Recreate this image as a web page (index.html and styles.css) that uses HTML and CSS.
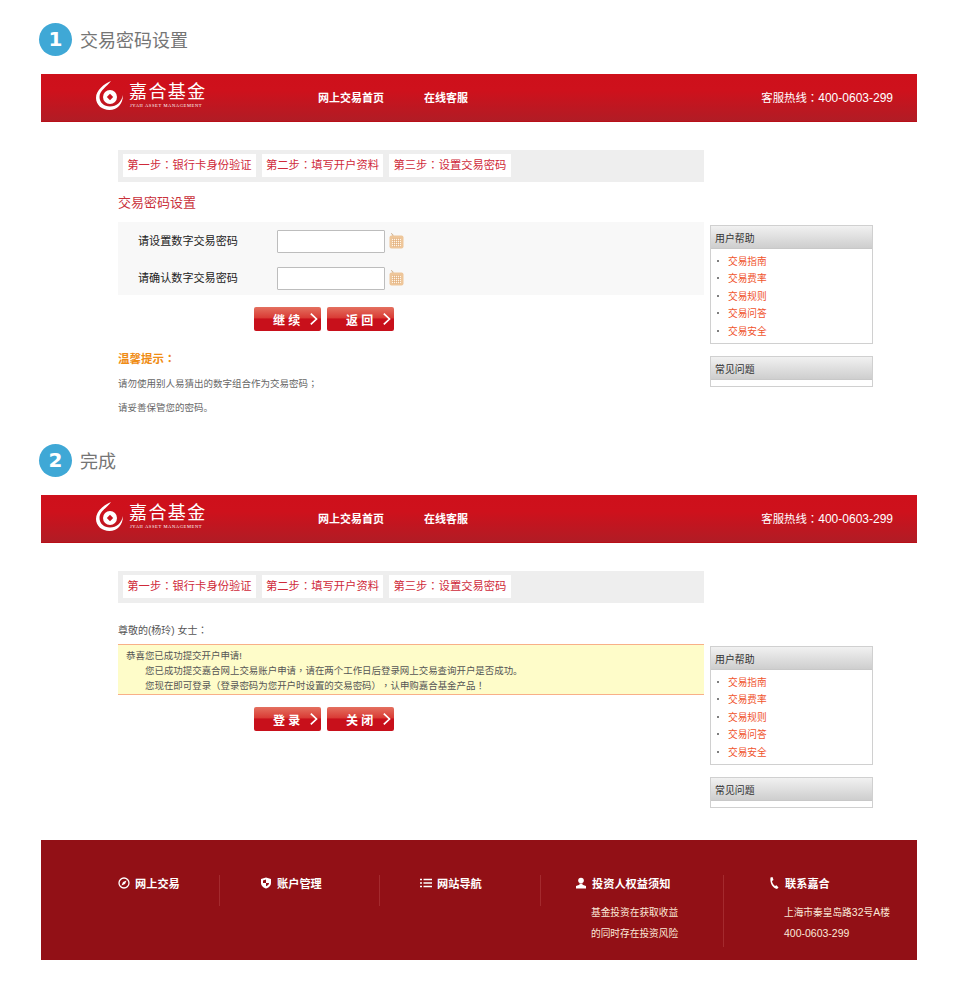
FILE: index.html
```html
<!DOCTYPE html>
<html lang="zh-CN">
<head>
<meta charset="utf-8">
<title>交易密码设置</title>
<link rel="stylesheet" href="styles.css">
</head>
<body>
<svg class="defs" width="0" height="0" aria-hidden="true">
  <symbol id="logo" viewBox="0 0 28 29">
    <path d="M15 0C8 3 0 9 0 17C0 24 6 29 13.500 29C21 29 27 23 27 14C25.500 21 20.500 25.500 14 25.500C8 25.500 3.500 21.500 3.500 16C3.500 9 11 6 15 0Z" fill="#fff"/>
    <circle cx="14" cy="16" r="7" fill="#fff"/>
    <path d="M14 12.800l3.200 3.200-3.200 3.200-3.200-3.200Z" fill="#c8141e"/>
  </symbol>
  <symbol id="keyboard" viewBox="0 0 15 16">
    <path d="M4 3C4 1 3 1 2 .5" fill="none" stroke="#c9a781" stroke-width="1"/>
    <rect x="0.500" y="2.500" width="14" height="13" rx="2" fill="#eec69a"/>
    <path d="M3 6.500h9M3 8.500h9M3 10.500h9M3 12.500h9" stroke="#fff6e8" stroke-width="1"/>
    <path d="M4.500 5.500v8M6.500 5.500v8M8.500 5.500v8M10.500 5.500v8" stroke="#dca877" stroke-width=".7"/>
  </symbol>
  <symbol id="chevron" viewBox="0 0 8 12">
    <path d="M.8 .6L6.500 6 .8 11.400" fill="none" stroke="#fff" stroke-width="1.700"/>
  </symbol>
</svg>

<section class="block">
  <h2 class="block-title"><span class="num">1</span>交易密码设置</h2>
  <header class="banner">
    <div class="logo">
      <svg class="logo-mark"><use href="#logo"/></svg>
      <div class="logo-text"><span class="logo-cn">嘉合基金</span><span class="logo-en">JYAH ASSET MANAGEMENT</span></div>
    </div>
    <nav class="nav"><a>网上交易首页</a><a>在线客服</a></nav>
    <div class="hotline"><span class="hotline-cn">客服热线<span class="mid" lang="zh-TW">：</span></span>400-0603-299</div>
  </header>
  <div class="content">
    <main class="main">
      <div class="steps"><span class="step">第一步<span class="mid" lang="zh-TW">：</span>银行卡身份验证</span><span class="step">第二步<span class="mid" lang="zh-TW">：</span>填写开户资料</span><span class="step">第三步<span class="mid" lang="zh-TW">：</span>设置交易密码</span></div>
      <h3 class="form-title">交易密码设置</h3>
      <form class="form">
        <div class="form-row"><label class="form-label">请设置数字交易密码</label><input class="form-input" type="password"><svg class="kb"><use href="#keyboard"/></svg></div>
        <div class="form-row"><label class="form-label">请确认数字交易密码</label><input class="form-input" type="password"><svg class="kb"><use href="#keyboard"/></svg></div>
      </form>
      <div class="actions">
        <a class="btn">继 续<svg class="chev"><use href="#chevron"/></svg></a>
        <a class="btn">返 回<svg class="chev"><use href="#chevron"/></svg></a>
      </div>
      <h4 class="tips-title">温馨提示<span class="mid" lang="zh-TW">：</span></h4>
      <p class="tip">请勿使用别人易猜出的数字组合作为交易密码<span class="mid" lang="zh-TW">；</span></p>
      <p class="tip">请妥善保管您的密码。</p>
    </main>
    <aside class="side">
      <div class="box box-help">
        <div class="box-head">用户帮助</div>
        <ul class="links"><li>交易指南</li><li>交易费率</li><li>交易规则</li><li>交易问答</li><li>交易安全</li></ul>
      </div>
      <div class="box box-faq"><div class="box-head">常见问题</div></div>
    </aside>
  </div>
</section>

<section class="block block-second">
  <h2 class="block-title"><span class="num">2</span>完成</h2>
  <header class="banner">
    <div class="logo">
      <svg class="logo-mark"><use href="#logo"/></svg>
      <div class="logo-text"><span class="logo-cn">嘉合基金</span><span class="logo-en">JYAH ASSET MANAGEMENT</span></div>
    </div>
    <nav class="nav"><a>网上交易首页</a><a>在线客服</a></nav>
    <div class="hotline"><span class="hotline-cn">客服热线<span class="mid" lang="zh-TW">：</span></span>400-0603-299</div>
  </header>
  <div class="content">
    <main class="main">
      <div class="steps"><span class="step">第一步<span class="mid" lang="zh-TW">：</span>银行卡身份验证</span><span class="step">第二步<span class="mid" lang="zh-TW">：</span>填写开户资料</span><span class="step">第三步<span class="mid" lang="zh-TW">：</span>设置交易密码</span></div>
      <p class="greeting">尊敬的(杨玲) 女士<span class="mid" lang="zh-TW">：</span></p>
      <div class="notice">
        <p>恭喜您已成功提交开户申请!</p>
        <p class="notice-indent">您已成功提交嘉合网上交易账户申请<span class="mid" lang="zh-TW">，</span>请在两个工作日后登录网上交易查询开户是否成功。</p>
        <p class="notice-indent">您现在即可登录<span class="mid" lang="zh-TW">（</span>登录密码为您开户时设置的交易密码<span class="mid" lang="zh-TW">），</span>认申购嘉合基金产品<span class="mid" lang="zh-TW">！</span></p>
      </div>
      <div class="actions">
        <a class="btn">登 录<svg class="chev"><use href="#chevron"/></svg></a>
        <a class="btn">关 闭<svg class="chev"><use href="#chevron"/></svg></a>
      </div>
    </main>
    <aside class="side">
      <div class="box box-help">
        <div class="box-head">用户帮助</div>
        <ul class="links"><li>交易指南</li><li>交易费率</li><li>交易规则</li><li>交易问答</li><li>交易安全</li></ul>
      </div>
      <div class="box box-faq"><div class="box-head">常见问题</div></div>
    </aside>
  </div>
</section>

<footer class="footer">
  <div class="fcol fcol-1"><div class="ftitle"><svg class="ficon" viewBox="0 0 12 12"><circle cx="6" cy="6" r="5" fill="none" stroke="#fff" stroke-width="1.300"/><path d="M8.500 3.500L7 7 3.500 8.500 5 5Z" fill="#fff"/></svg>网上交易</div></div>
  <div class="fcol fcol-2"><div class="ftitle"><svg class="ficon" viewBox="0 0 12 12"><path d="M6 .5L11 2v4c0 3-2.500 4.800-5 5.500C3.500 10.800 1 9 1 6V2Z" fill="#fff"/><path d="M6 2.500V6H9c0 1.700-1.500 2.800-3 3.300V6H3V3.400Z" fill="#921016"/></svg>账户管理</div></div>
  <div class="fcol fcol-3"><div class="ftitle"><svg class="ficon" viewBox="0 0 12 12"><path d="M3.500 2.500H12M3.500 6H12M3.500 9.500H12" stroke="#fff" stroke-width="1.500"/><path d="M0 2.500H2M0 6H2M0 9.500H2" stroke="#fff" stroke-width="1.500"/></svg>网站导航</div></div>
  <div class="fcol fcol-4"><div class="ftitle"><svg class="ficon" viewBox="0 0 12 12"><circle cx="6" cy="3.500" r="2.800" fill="#fff"/><path d="M4.500 6.500h3v1.200L11 9v2.500H1V9l3.500-1.300Z" fill="#fff"/></svg>投资人权益须知</div>
    <p class="fsub">基金投资在获取收益</p><p class="fsub">的同时存在投资风险</p></div>
  <div class="fcol fcol-5"><div class="ftitle"><svg class="ficon" viewBox="0 0 12 12"><path d="M2.500 .5L4.500 0l1 3-1.500 1c.3 2 1.300 3.700 3 5l1.500-.8L10.500 10.500 9 12C5 11.500 1.500 6 2.500 .5Z" fill="#fff"/></svg>联系嘉合</div>
    <p class="fsub">上海市秦皇岛路<span class="fnum">32</span>号<span class="fnum">A</span>楼</p><p class="fsub fnum">400-0603-299</p></div>
</footer>
</body>
</html>
```

FILE: styles.css
```css
* { box-sizing: border-box; }
html, body { margin: 0; padding: 0; background: #fff; }
body {
  width: 963px;
  height: 1005px;
  overflow: hidden;
  font-family: "Liberation Sans", "Noto Sans CJK SC", sans-serif;
  color: #666;
  text-spacing-trim: space-all;
}
h2, h3, h4, p, ul { margin: 0; padding: 0; }
.defs { position: absolute; }
.mid { font-family: "Noto Sans CJK TC", sans-serif; line-height: 1; }

.block { padding-top: 23px; }
.block-second { padding-top: 24px; }
.block-title {
  display: flex;
  align-items: center;
  gap: 8px;
  height: 33px;
  padding-left: 39px;
  padding-bottom: 1px;
  font-size: 18px;
  font-weight: 400;
  color: #757575;
}
.num {
  width: 33px;
  height: 33px;
  margin-bottom: -1px;
  border-radius: 50%;
  background: #3fa8d6;
  color: #fff;
  font-family: "DejaVu Sans", sans-serif;
  font-size: 20px;
  font-weight: 700;
  line-height: 33px;
  text-align: center;
}

.banner {
  display: flex;
  align-items: center;
  width: 876px;
  height: 48px;
  margin: 18px 0 0 41px;
  padding: 0 24px 0 55px;
  background: linear-gradient(#ce101b 0, #ce111c 35%, #b11c25 100%);
  border-bottom: 1px solid #b80f18;
  color: #fff;
}
.logo { display: flex; width: 222px; height: 48px; padding-top: 7px; }
.logo-mark { width: 28px; height: 29px; }
.logo-text { display: flex; flex-direction: column; margin: -2px 0 0 5px; }
.logo-cn { font-family: "Noto Sans CJK SC", sans-serif; font-size: 18px; font-weight: 400; line-height: 23px; letter-spacing: 1.400px; }
.logo-en { font-family: "Liberation Serif", serif; font-size: 4.500px; line-height: 6px; letter-spacing: 0.620px; white-space: nowrap; padding-left: 1px; margin-top: 1px; }
.nav { display: flex; gap: 40px; margin-bottom: 1px; font-size: 11px; font-weight: 700; }
.hotline { margin-left: auto; margin-bottom: 1px; font-size: 12px; }
.hotline-cn { font-size: 11.400px; }

.content { display: flex; padding: 28px 0 0 118px; }
.main { width: 586px; }
.side { width: 163px; margin-left: 6px; padding-top: 75px; }

.steps {
  display: flex;
  gap: 5.800px;
  height: 32px;
  padding: 4px 5px;
  background: #eeeeee;
}
.step {
  height: 23px;
  padding: 0 4.300px;
  background: #fff;
  color: #cf2a3a;
  font-size: 11.300px;
  line-height: 22px;
  white-space: nowrap;
}

.form-title {
  height: 40px;
  padding-top: 3px;
  font-size: 13px;
  font-weight: 400;
  line-height: 36px;
  color: #c9303a;
}
.form {
  display: flex;
  flex-direction: column;
  gap: 14px;
  height: 73px;
  padding: 8px 0 0 20px;
  background: #f8f8f8;
}
.form-row { display: flex; align-items: center; height: 23px; }
.form-label { width: 139px; margin-bottom: 3px; font-size: 11.100px; color: #222; }
.form-input {
  width: 108px;
  height: 23px;
  margin: 0;
  padding: 0;
  background: #fff;
  border: 1px solid #bdbdbd;
  border-radius: 1px;
  outline: none;
}
.kb { width: 15px; height: 16px; margin: 0 0 2px 4px; }

.actions { display: flex; gap: 6px; margin-top: 12px; padding-left: 136px; }
.btn {
  display: flex;
  align-items: center;
  justify-content: space-between;
  width: 67px;
  height: 24px;
  padding: 0 3px 0 19px;
  border-radius: 2px;
  background: linear-gradient(#e4705f 0, #d93b35 45%, #c8101b 50%, #c8101b 100%);
  color: #fff;
  font-size: 12px;
  font-weight: 700;
  white-space: pre;
}
.chev { width: 8px; height: 12px; }

.tips-title {
  height: 16px;
  margin-top: 20px;
  font-size: 11.500px;
  font-weight: 700;
  line-height: 16px;
  color: #f08c14;
}
.tips-title + .tip { margin-top: 5px; }
.tip { height: 24px; font-size: 9.500px; line-height: 24px; color: #666; }

.greeting { height: 35px; padding-top: 20px; font-size: 10px; line-height: 16px; color: #555; }
.notice {
  height: 51px;
  margin-top: 6px;
  padding: 3px 8px 0;
  background: #fefcc9;
  border-top: 1px solid #f8b088;
  border-bottom: 1px solid #f8b088;
  font-size: 9.450px;
  line-height: 15px;
  color: #555;
}
.notice p { height: 15px; }
.notice-indent { padding-left: 19px; white-space: nowrap; }

.box {
  background: #fff;
  border: 1px solid #d0d0d0;
}
.box-help { height: 119px; }
.box-faq { height: 31px; margin-top: 12px; }
.box-head {
  height: 23px;
  padding-left: 4px;
  background: linear-gradient(#f1f1f1, #cecece);
  border-bottom: 1px solid #c8c8c8;
  font-size: 9.900px;
  line-height: 25px;
  color: #333;
}
.links { list-style: none; padding: 3px 0 0 6px; }
.links li {
  display: flex;
  align-items: center;
  height: 17.500px;
  font-size: 9.700px;
  color: #f0532d;
}
.links li::before {
  content: "";
  width: 2px;
  height: 2px;
  margin-right: 9px;
  background: #555;
  border-radius: 50%;
}

.footer {
  display: grid;
  grid-template-columns: 179px 160px 161px 183px 193px;
  align-items: start;
  width: 876px;
  height: 120px;
  margin: 32px 0 0 41px;
  padding-top: 35px;
  background: #921016;
  color: #fff;
}
.fcol { border-right: 1px solid #a42a2e; }
.fcol-1, .fcol-2, .fcol-3 { height: 31px; }
.fcol-4 { height: 72px; }
.fcol-5 { border-right: 0; }
.fcol-1 { padding-left: 77px; }
.fcol-2 { padding-left: 40px; }
.fcol-3 { padding-left: 40px; }
.fcol-4 { padding-left: 34px; }
.fcol-5 { padding-left: 44px; }
.ftitle {
  display: flex;
  align-items: center;
  gap: 5px;
  height: 16px;
  margin-bottom: 11px;
  font-size: 11.200px;
  font-weight: 700;
  white-space: nowrap;
}
.ficon { width: 12px; height: 12px; flex: none; }
.fsub { padding-left: 16px; font-size: 9.700px; line-height: 21px; color: #fbe8d8; white-space: nowrap; }
.fnum { font-size: 10.500px; }
```
